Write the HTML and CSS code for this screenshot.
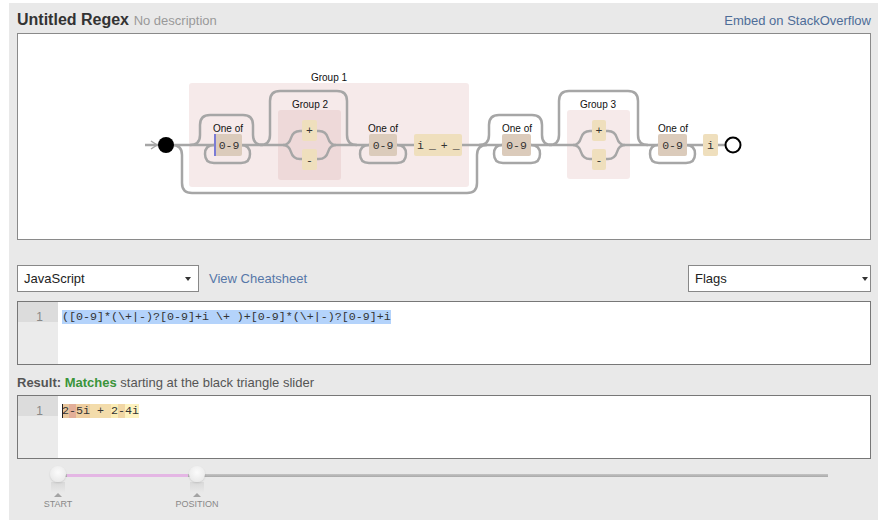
FILE: index.html
```html
<!DOCTYPE html>
<html>
<head>
<meta charset="utf-8">
<title>Untitled Regex</title>
<link rel="stylesheet" href="styles.css">
</head>
<body>
<div class="panel">
  <div class="header">
    <div class="title"><span class="name">Untitled Regex</span> <span class="desc">No description</span></div>
    <a class="embed">Embed on StackOverflow</a>
  </div>

  <div class="diagram">
    <svg class="rail" width="852" height="205" viewBox="18 34 852 205" xmlns="http://www.w3.org/2000/svg">
      <g class="grp">
        <rect x="189" y="83" width="280" height="104" rx="3"/>
        <rect x="278" y="110" width="63" height="70" rx="3"/>
        <rect x="567" y="110" width="63" height="69" rx="3"/>
      </g>
      <g class="lbl">
        <text x="329" y="81">Group 1</text>
        <text x="310" y="108">Group 2</text>
        <text x="598" y="108">Group 3</text>
        <text x="228" y="132">One of</text>
        <text x="383" y="132">One of</text>
        <text x="517" y="132">One of</text>
        <text x="673" y="132">One of</text>
      </g>
      <g class="path">
        <path d="M145,145 H283"/>
        <path d="M336,145 H573"/>
        <path d="M625,145 H725"/>
        <path d="M172,145 q10,0 10,10 v28 q0,10 10,10 h275 q10,0 10,-10 v-28 q0,-10 10,-10"/>
        <path d="M190,145 q10,0 10,-10 v-10 q0,-10 10,-10 h33 q10,0 10,10 v10 q0,10 10,10"/>
        <path d="M214,145 q-9,0 -9,9 q0,9 9,9 h27 q9,0 9,-9 q0,-9 -9,-9"/>
        <path d="M260,145 q10,0 10,-10 v-34 q0,-10 10,-10 h57 q10,0 10,10 v34 q0,10 10,10"/>
        <path d="M283,145 q6,0 8,-7 q2,-7 9,-7 h2"/>
        <path d="M283,145 q6,0 8,7 q2,7 9,7 h2"/>
        <path d="M317,131 h2 q7,0 9,7 q2,7 8,7"/>
        <path d="M317,159 h2 q7,0 9,-7 q2,-7 8,-7"/>
        <path d="M369,145 q-9,0 -9,9 q0,9 9,9 h28 q9,0 9,-9 q0,-9 -9,-9"/>
        <path d="M479,145 q10,0 10,-10 v-10 q0,-10 10,-10 h33 q10,0 10,10 v10 q0,10 10,10"/>
        <path d="M502,145 q-8,0 -8,9 q0,9 9,9 h28 q9,0 9,-9 q0,-9 -9,-9"/>
        <path d="M549,145 q10,0 10,-10 v-34 q0,-10 10,-10 h59 q10,0 10,10 v34 q0,10 10,10"/>
        <path d="M573,145 q6,0 8,-7 q2,-7 9,-7 h2"/>
        <path d="M573,145 q6,0 8,7 q2,7 9,7 h2"/>
        <path d="M606,131 h2 q7,0 9,7 q2,7 8,7"/>
        <path d="M606,159 h2 q7,0 9,-7 q2,-7 8,-7"/>
        <path d="M658,145 q-8,0 -8,9 q0,9 9,9 h27 q9,0 9,-9 q0,-9 -9,-9"/>
      </g>
      <path class="arrow" d="M151,141 L157,145 L151,149"/>
      <g class="cs">
        <rect x="214" y="134" width="28" height="22" rx="2"/>
        <rect x="369" y="134" width="28" height="22" rx="2"/>
        <rect x="502" y="134" width="29" height="22" rx="2"/>
        <rect x="658" y="134" width="29" height="22" rx="2"/>
      </g>
      <rect class="cursor" x="214" y="134" width="2" height="22"/>
      <g class="lit">
        <rect x="302" y="120" width="15" height="21" rx="2"/>
        <rect x="302" y="149" width="15" height="21" rx="2"/>
        <rect x="414" y="134" width="48" height="22" rx="2"/>
        <rect x="592" y="120" width="14" height="21" rx="2"/>
        <rect x="592" y="149" width="14" height="21" rx="2"/>
        <rect x="703" y="134" width="15" height="22" rx="2"/>
      </g>
      <g class="mono">
        <text x="229" y="149">0-9</text>
        <text x="383" y="149">0-9</text>
        <text x="516.5" y="149">0-9</text>
        <text x="672.5" y="149">0-9</text>
        <text x="309.5" y="134">+</text>
        <text x="309.5" y="164">-</text>
        <text x="599" y="134">+</text>
        <text x="599" y="164">-</text>
        <text x="710.5" y="149">i</text>
      </g>
      <text class="mono-l" x="417" y="149">i_+_</text>
      <circle cx="166" cy="145" r="8" fill="#000"/>
      <circle cx="733" cy="145" r="7.5" fill="#fff" stroke="#000" stroke-width="2"/>
    </svg>
  </div>

  <div class="controls">
    <div class="select lang"><span>JavaScript</span><i class="caret"></i></div>
    <a class="cheat">View Cheatsheet</a>
    <div class="select flags"><span>Flags</span><i class="caret"></i></div>
  </div>

  <div class="editor regex">
    <div class="gutter"><div class="ln">1</div></div>
    <div class="code"><span class="sel">([0-9]*(\+|-)?[0-9]+i \+ )+[0-9]*(\+|-)?[0-9]+i</span></div>
  </div>

  <div class="result-label"><b>Result:</b> <b class="ok">Matches</b> starting at the black triangle slider</div>

  <div class="editor result">
    <div class="gutter"><div class="ln">1</div></div>
    <div class="code"><span class="m1">2</span><span class="m2">-</span><span class="m3">5i</span><span class="m4"> + </span><span class="m5">2</span><span class="m6">-</span><span class="m7">4i</span></div>
  </div>

  <div class="slider">
    <div class="track"><div class="fill"></div></div>
    <div class="thumb start"><span class="knob"></span><span class="stem"></span><span class="tri"></span><span class="tlabel">START</span></div>
    <div class="thumb pos"><span class="knob"></span><span class="stem"></span><span class="tri"></span><span class="tlabel">POSITION</span></div>
  </div>
</div>
</body>
</html>
```

FILE: styles.css
```css
* { box-sizing: border-box; }
html, body { margin: 0; background: #fff; }
body {
  font-family: "Liberation Sans", Arial, sans-serif;
  font-size: 13px;
  color: #333;
}
.panel {
  margin: 3px 0 0 9px;
  width: 869px;
  height: 517px;
  background: #e9e9e9;
  padding: 0 7px 0 8px;
}
.header {
  display: flex;
  justify-content: space-between;
  align-items: baseline;
  padding-top: 8px;
  height: 30px;
  line-height: 18px;
}
.name { font-size: 16px; font-weight: bold; color: #333; }
.desc { color: #999; font-size: 13px; margin-left: 1px; }
.embed { color: #4e6d98; }

.diagram {
  height: 207px;
  background: #fff;
  border: 1px solid #8a8a8a;
}
.rail { display: block; }
.grp rect { fill: rgba(210, 150, 150, 0.2); }
.lbl text {
  font-family: "Liberation Sans", Arial, sans-serif;
  font-size: 10px;
  text-anchor: middle;
  fill: #111;
}
.path path { fill: none; stroke: #a6a6a6; stroke-width: 2.5; }
.arrow { fill: none; stroke: #a6a6a6; stroke-width: 1.5; }
.cs rect { fill: #dbcbbb; }
.cursor { fill: #7b7bd5; }
.lit rect { fill: #efdfbd; }
.mono text, .mono-l {
  font-family: "Liberation Mono", monospace;
  font-size: 11.5px;
  fill: #333;
}
.mono text { text-anchor: middle; }
.mono-l { letter-spacing: 5px; }

.controls {
  display: flex;
  align-items: center;
  margin-top: 25px;
  height: 27px;
}
.select {
  height: 27px;
  background: #fff;
  border: 1px solid #888;
  display: flex;
  align-items: center;
  justify-content: space-between;
  padding: 0 7px 0 6px;
  color: #222;
}
.lang { width: 182px; }
.flags { width: 183px; margin-left: auto; padding-right: 2px; }
.caret {
  width: 0;
  height: 0;
  border-left: 3px solid transparent;
  border-right: 3px solid transparent;
  border-top: 4px solid #333;
}
.cheat { margin-left: 10px; color: #5677a8; }

.editor {
  display: flex;
  height: 64px;
  background: #fff;
  border: 1px solid #777;
}
.regex { margin-top: 9px; }
.gutter { width: 40px; background: #ebebeb; flex: none; }
.ln {
  height: 20px;
  padding: 9px 15px 0 0;
  line-height: 12px;
  text-align: right;
  font-size: 12px;
  color: #888;
  background: #dcdcdc;
}
.code {
  padding: 9px 0 0 4px;
  font-family: "Liberation Mono", monospace;
  font-size: 11.67px;
  line-height: 12px;
  color: #333;
  white-space: pre;
}
.sel { background: #b4d3fb; }
.m1 { background: #e9c69c; box-shadow: inset 1px 0 0 #222; }
.m2 { background: #e3ae98; }
.m3 { background: #efcea0; }
.m4 { background: #f3dcab; }
.m5 { background: #fbecb4; }
.m6 { background: #f1d6a4; }
.m7 { background: #fdf2bf; }

.result-label { padding: 10px 0 4px; line-height: 16px; color: #555; }
.ok { color: #3a943a; }

.slider { position: relative; height: 61px; padding-top: 15px; }
.track {
  position: relative;
  margin-left: 41px;
  width: 770px;
  height: 3px;
  background: linear-gradient(#c4c4c4, #a9a9a9);
}
.fill {
  position: absolute;
  left: 9px;
  top: 0;
  width: 121px;
  height: 3px;
  background: #e4b6e4;
}
.thumb {
  position: absolute;
  top: 7px;
  width: 50px;
  display: flex;
  flex-direction: column;
  align-items: center;
}
.start { left: 16px; }
.pos { left: 155px; }
.knob {
  width: 16px;
  height: 16px;
  border-radius: 50%;
  background: radial-gradient(circle at 50% 40%, #fbfbfb, #e4e4e4);
  box-shadow: 0 1px 2px rgba(0, 0, 0, 0.12);
}
.stem {
  width: 14px;
  height: 11px;
  background: linear-gradient(rgba(0, 0, 0, 0.07), rgba(0, 0, 0, 0));
}
.tri {
  width: 0;
  height: 0;
  border-left: 4px solid transparent;
  border-right: 4px solid transparent;
  border-bottom: 4px solid #a3a3a3;
}
.tlabel {
  margin-top: 2px;
  font-size: 9px;
  line-height: 10px;
  color: #888;
}
```
